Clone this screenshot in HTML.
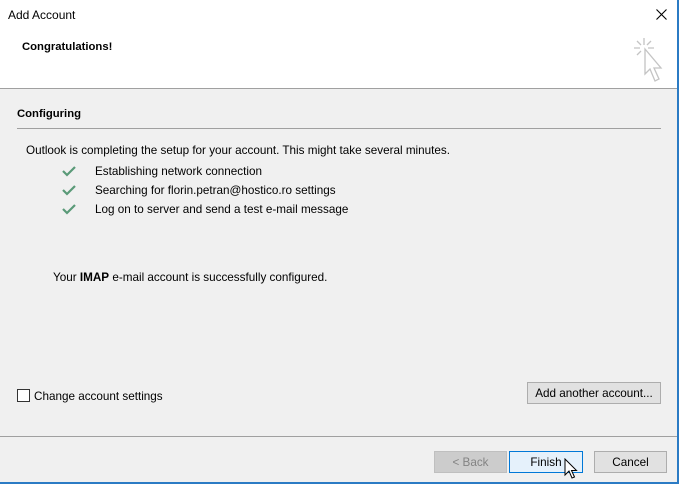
<!DOCTYPE html>
<html><head><meta charset="utf-8"><style>
*{margin:0;padding:0;box-sizing:border-box}
body{width:679px;height:484px;overflow:hidden;font-family:"Liberation Sans",sans-serif;font-size:11.7px;color:#000;background:#f0f0f0;position:relative}
.a{position:absolute;white-space:nowrap}
.btn{position:absolute;border:1px solid #adadad;background:#e1e1e1;text-align:center;line-height:21px;font-size:11.7px}
</style></head><body>
<div class="a" style="left:0;top:0;width:679px;height:88px;background:#fff"></div>
<div class="a" style="left:0;top:88px;width:679px;height:1px;background:#a0a0a0"></div>
<div class="a" style="left:8px;top:8px;font-size:12px">Add Account</div>
<svg class="a" style="left:656px;top:9px" width="11" height="11"><path d="M0.5 0.5L10.5 10.5M10.5 0.5L0.5 10.5" stroke="#000" stroke-width="1.1"/></svg>
<div class="a" style="left:22px;top:41px;font-weight:bold;font-size:11.3px">Congratulations!</div>
<svg class="a" style="left:630px;top:36px" width="36" height="50">
<g stroke="#c4c4c4" stroke-width="1.3" fill="none">
<path d="M14 2V9M4 12H10M18 12H24M7 5L11 9M21 5L17 9M7 19L11 15"/>
<path d="M15 13L15 38L20 33L25 45L29 43L24 32L31 32Z" fill="#fff"/>
</g></svg>
<div class="a" style="left:17px;top:108px;font-weight:bold;font-size:11.3px">Configuring</div>
<div class="a" style="left:17px;top:128px;width:644px;height:1px;background:#a0a0a0"></div>
<div class="a" style="left:26px;top:144px">Outlook is completing the setup for your account. This might take several minutes.</div>
<svg class="a" style="left:62px;top:166px" width="14" height="50"><g stroke="#5a9a78" stroke-width="2.2" fill="none"><path d="M1 5L5 9L13 1"/><path d="M1 24L5 28L13 20"/><path d="M1 43L5 47L13 39"/></g></svg>
<div class="a" style="left:95px;top:165px">Establishing network connection</div>
<div class="a" style="left:95px;top:184px">Searching for florin.petran@hostico.ro settings</div>
<div class="a" style="left:95px;top:203px">Log on to server and send a test e-mail message</div>
<div class="a" style="left:53px;top:271px">Your <b>IMAP</b> e-mail account is successfully configured.</div>
<div class="a" style="left:17px;top:389px;width:13px;height:13px;border:1px solid #333;background:#fff"></div>
<div class="a" style="left:34px;top:390px">Change account settings</div>
<div class="btn" style="left:527px;top:382px;width:134px;height:22px">Add another account...</div>
<div class="a" style="left:0;top:436px;width:679px;height:1px;background:#a0a0a0"></div>
<div class="btn" style="left:434px;top:451px;width:73px;height:22px;background:#cccccc;border-color:#bfbfbf;color:#838383">&lt; Back</div>
<div class="btn" style="left:509px;top:451px;width:74px;height:22px;background:#e5f1fb;border-color:#0078d7">Finish</div>
<div class="btn" style="left:594px;top:451px;width:73px;height:22px">Cancel</div>
<svg class="a" style="left:564px;top:458px" width="14" height="22"><path d="M1 1V17L5 13L8 20L10.5 19L7.5 12.5H12.5Z" fill="#fff" stroke="#000" stroke-width="1"/></svg>
<div class="a" style="left:677px;top:0;width:2px;height:484px;background:#2b7bc4"></div>
<div class="a" style="left:0;top:482px;width:679px;height:2px;background:#2b7bc4"></div>
</body></html>
